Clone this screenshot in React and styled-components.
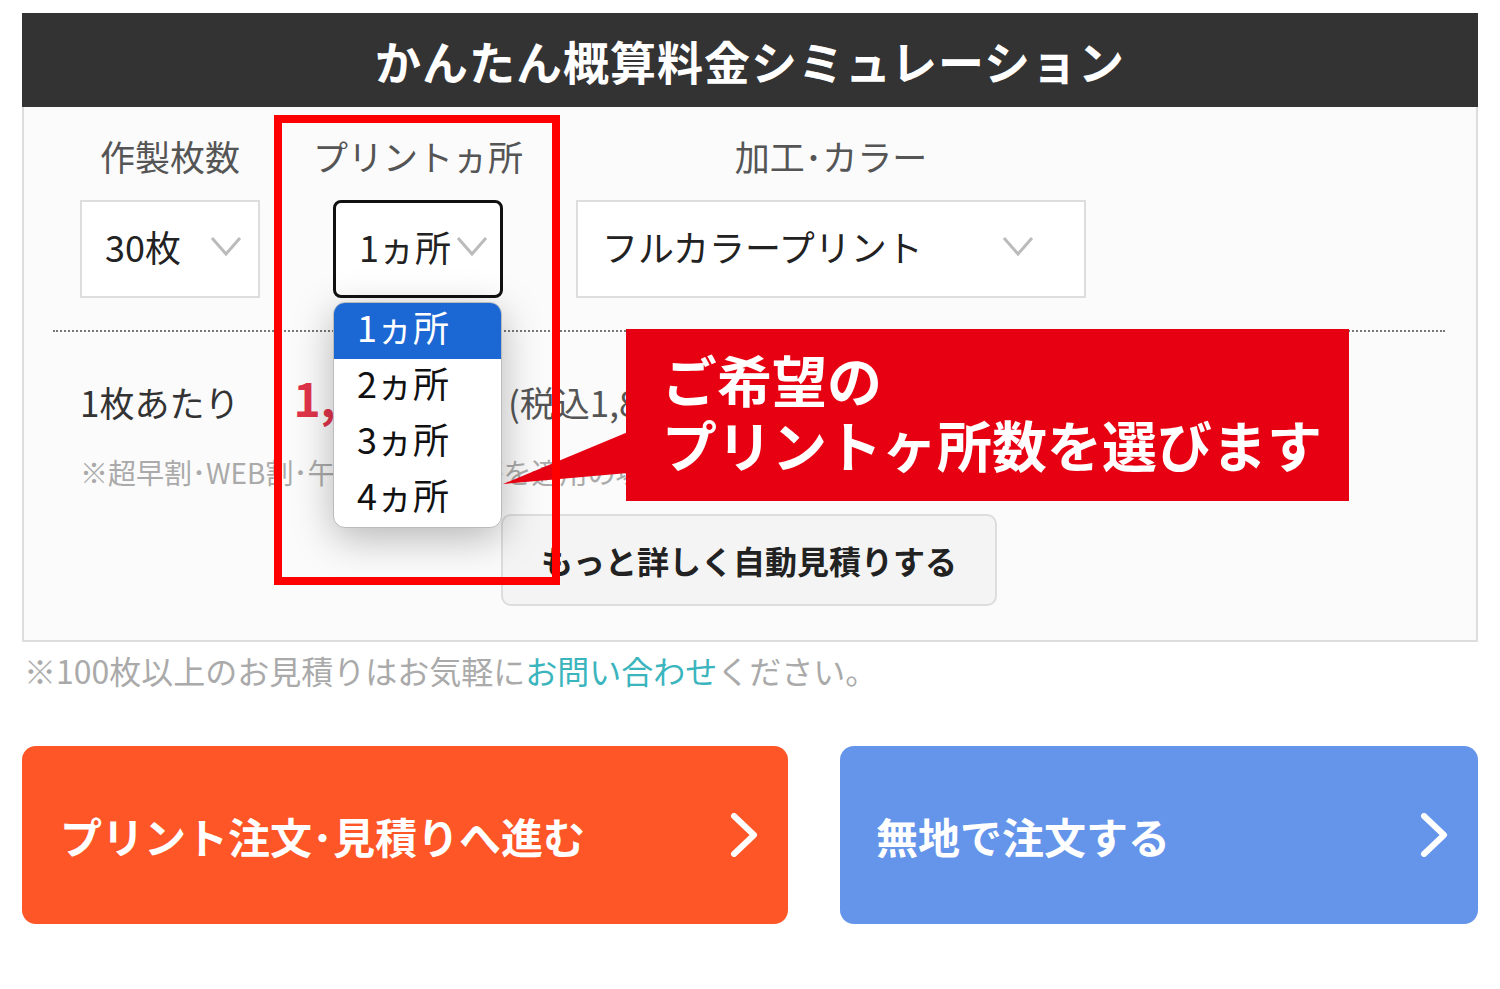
import React from "react";
import styled, { createGlobalStyle } from "styled-components";

const GlobalStyle = createGlobalStyle`
  body {
    margin: 0;
    background: #fff;
    font-family: "Noto Sans CJK JP", "Noto Sans", sans-serif;
  }
`;

const Page = styled.div`
  padding: 13px 22px;
`;

const Wrap = styled.div`
  position: relative;
  width: 1456px;
`;

const Header = styled.div`
  height: 94px;
  background: #333;
  color: #fff;
  font-size: 46px;
  font-weight: 700;
  display: flex;
  align-items: center;
  justify-content: center;
  letter-spacing: 1px;
`;

const Panel = styled.div`
  background: #fbfbfb;
  border: 2px solid #ddd;
  border-top: none;
  padding: 27px 0 34px;
`;

const Fields = styled.div`
  display: flex;
  gap: 73px;
  padding-left: 56px;
`;

const Field = styled.div`
  width: ${(p) => p.$w}px;
  display: flex;
  flex-direction: column;
  align-items: center;
  gap: 22px;
`;

const Label = styled.div`
  font-size: 35px;
  line-height: 44px;
  color: #555;
  white-space: nowrap;
`;

const SelectBox = styled.div`
  box-sizing: border-box;
  width: 100%;
  height: 98px;
  background: #fff;
  border: ${(p) => (p.$active ? "3px solid #111" : "2px solid #ddd")};
  border-radius: ${(p) => (p.$active ? "8px" : "0")};
  display: flex;
  align-items: center;
  justify-content: space-between;
  padding: 0 ${(p) => p.$pr}px 6px ${(p) => p.$pl}px;
  font-size: 36px;
  color: #222;
  white-space: nowrap;
`;

const Divider = styled.div`
  margin: 32px 31px 0 29px;
  border-top: 2px dotted #777;
`;

const PriceRow = styled.div`
  margin-top: 32px;
  padding-left: 56px;
  display: flex;
  align-items: baseline;
  height: 60px;
  color: #333;
  font-size: 35px;
  white-space: nowrap;
`;

const Price = styled.span`
  margin-left: 54px;
  color: #e0344a;
  font-size: 46px;
  font-weight: 700;
`;

const Tax = styled.span`
  margin-left: 45px;
  color: #555;
`;

const Note = styled.div`
  margin-top: 28px;
  padding-left: 56px;
  font-size: 28px;
  line-height: 40px;
  color: #aaa;
  white-space: nowrap;
`;

const MoreButton = styled.div`
  box-sizing: border-box;
  margin: 22px 0 0 477px;
  width: 496px;
  height: 92px;
  background: #f4f4f4;
  border: 2px solid #ddd;
  border-radius: 10px;
  display: flex;
  align-items: center;
  justify-content: center;
  font-size: 32px;
  font-weight: 700;
  color: #222;
`;

const BottomNote = styled.div`
  margin-top: 8px;
  padding-left: 2px;
  font-size: 32px;
  line-height: 40px;
  color: #aaa;
  white-space: nowrap;
  a {
    color: #3bb5bd;
    text-decoration: none;
  }
`;

const Actions = styled.div`
  margin-top: 56px;
  display: grid;
  grid-template-columns: 766px 1fr;
  gap: 52px;
`;

const ActionButton = styled.div`
  height: 178px;
  border-radius: 14px;
  background: ${(p) => p.$bg};
  color: #fff;
  display: flex;
  align-items: center;
  justify-content: space-between;
  padding: 0 30px 0 ${(p) => p.$pl}px;
  font-size: 42px;
  font-weight: 700;
`;

const Dropdown = styled.div`
  position: absolute;
  left: 311px;
  top: 289px;
  width: 167px;
  height: 224px;
  background: #fff;
  border: 1px solid #bbb;
  border-radius: 12px;
  overflow: hidden;
  box-shadow: 0 10px 40px rgba(0, 0, 0, 0.28);
  z-index: 2;
`;

const Option = styled.div`
  box-sizing: border-box;
  height: 56px;
  display: flex;
  align-items: center;
  padding: 0 0 10px 23px;
  font-size: 36px;
  background: ${(p) => (p.$selected ? "#1b67d3" : "transparent")};
  color: ${(p) => (p.$selected ? "#fff" : "#111")};
`;

const Callout = styled.div`
  position: absolute;
  left: 604px;
  top: 316px;
  width: 723px;
  height: 172px;
  box-sizing: border-box;
  padding: 17px 0 0 36px;
  background: #e60012;
  color: #fff;
  font-size: 55px;
  line-height: 65px;
  font-weight: 700;
  white-space: nowrap;
  z-index: 3;
  &::before {
    content: "";
    position: absolute;
    left: -123px;
    top: 103px;
    width: 125px;
    height: 52px;
    background: #e60012;
    clip-path: polygon(100% 0, 0 100%, 100% 79%);
  }
`;

const Highlight = styled.div`
  position: absolute;
  left: 252px;
  top: 102px;
  width: 286px;
  height: 470px;
  box-sizing: border-box;
  border: 8px solid #ff0000;
  z-index: 4;
  pointer-events: none;
`;

const Chevron = () => (
  <svg width="32" height="22" viewBox="0 0 32 22">
    <polyline points="2,3 16,19 30,3" fill="none" stroke="#bbb" strokeWidth="3" />
  </svg>
);

const Arrow = () => (
  <svg width="28" height="44" viewBox="0 0 28 44">
    <polyline points="4,3 24,22 4,41" fill="none" stroke="#fff" strokeWidth="6" strokeLinecap="round" strokeLinejoin="round" />
  </svg>
);

export default function App() {
  return (
    <Page>
      <GlobalStyle />
      <Wrap>
        <Header>かんたん概算料金シミュレーション</Header>
        <Panel>
          <Fields>
            <Field $w={180}>
              <Label>作製枚数</Label>
              <SelectBox $pl={23} $pr={16}>
                30枚
                <Chevron />
              </SelectBox>
            </Field>
            <Field $w={170}>
              <Label>プリントヵ所</Label>
              <SelectBox $active $pl={23} $pr={12}>
                1ヵ所
                <Chevron />
              </SelectBox>
            </Field>
            <Field $w={510}>
              <Label>加工･カラー</Label>
              <SelectBox $pl={24} $pr={50}>
                フルカラープリント
                <Chevron />
              </SelectBox>
            </Field>
          </Fields>
          <Divider />
          <PriceRow>
            1枚あたり
            <Price>1,650円</Price>
            <Tax>(税込1,815円)</Tax>
          </PriceRow>
          <Note>※超早割･WEB割･午後発送割引等を適用の場合</Note>
          <MoreButton>もっと詳しく自動見積りする</MoreButton>
        </Panel>
        <BottomNote>
          ※100枚以上のお見積りはお気軽に<a href="#">お問い合わせ</a>ください。
        </BottomNote>
        <Actions>
          <ActionButton $bg="#fe5626" $pl={38}>
            プリント注文･見積りへ進む
            <Arrow />
          </ActionButton>
          <ActionButton $bg="#6595ea" $pl={36}>
            無地で注文する
            <Arrow />
          </ActionButton>
        </Actions>

        <Dropdown>
          <Option $selected>1ヵ所</Option>
          <Option>2ヵ所</Option>
          <Option>3ヵ所</Option>
          <Option>4ヵ所</Option>
        </Dropdown>
        <Callout>
          ご希望の
          <br />
          プリントヶ所数を選びます
        </Callout>
        <Highlight />
      </Wrap>
    </Page>
  );
}
